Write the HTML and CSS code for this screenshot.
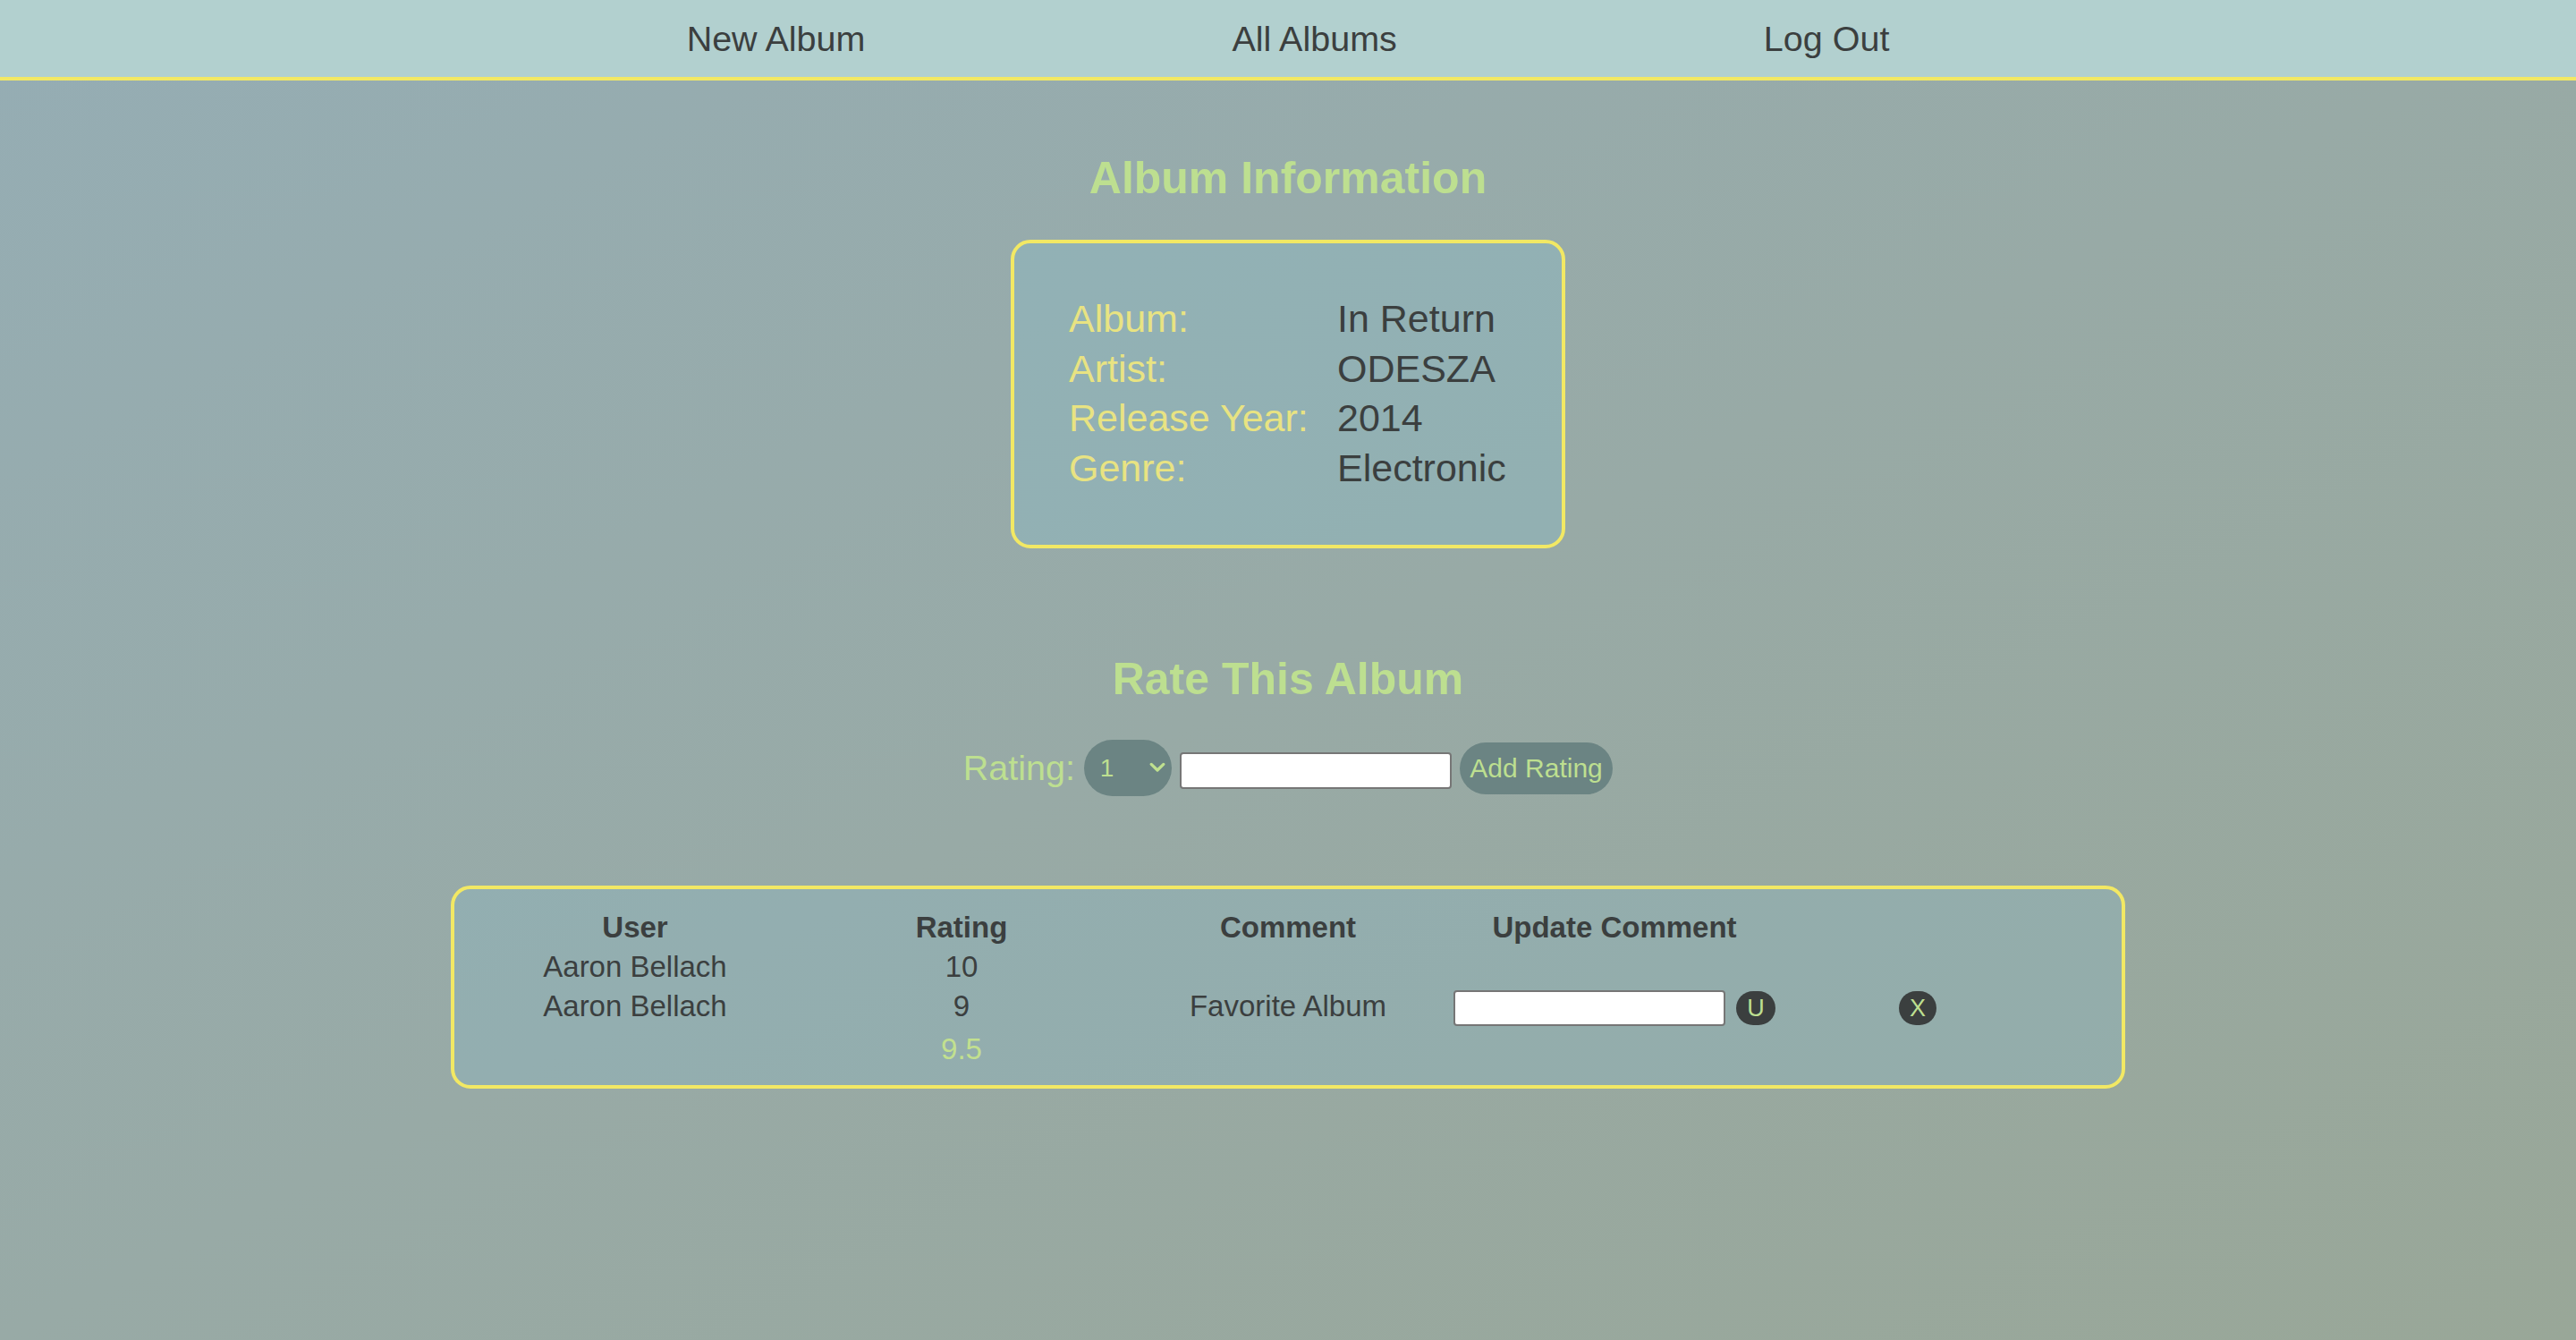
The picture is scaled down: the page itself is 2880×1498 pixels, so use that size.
FILE: index.html
```html
<!DOCTYPE html>
<html lang="en">
<head>
<meta charset="utf-8">
<title>In Return - ODESZA</title>
<link rel="stylesheet" href="styles.css">
</head>
<body>
<nav class="topnav">
  <a class="nav-link" href="#">New Album</a>
  <a class="nav-link" href="#">All Albums</a>
  <a class="nav-link" href="#">Log Out</a>
</nav>

<main class="page">
  <h2 class="section-title title-info">Album Information</h2>
  <section class="info-card">
    <div class="info-label">Album:</div><div class="info-value">In Return</div>
    <div class="info-label">Artist:</div><div class="info-value">ODESZA</div>
    <div class="info-label">Release Year:</div><div class="info-value">2014</div>
    <div class="info-label">Genre:</div><div class="info-value">Electronic</div>
  </section>

  <h2 class="section-title title-rate">Rate This Album</h2>
  <form class="rate-form">
    <label class="rate-label">Rating:</label>
    <span class="select-wrap">
      <select class="rate-select">
        <option>1</option><option>2</option><option>3</option><option>4</option><option>5</option>
        <option>6</option><option>7</option><option>8</option><option>9</option><option>10</option>
      </select>
      <svg class="chevron" viewBox="0 0 18 12" width="18" height="12" aria-hidden="true">
        <polyline points="2.2,2.4 9,9 15.8,2.4" fill="none" stroke="#bfe08f" stroke-width="3.2" stroke-linecap="round" stroke-linejoin="round"/>
      </svg>
    </span>
    <input class="text-input rate-input" type="text">
    <button class="pill-btn" type="button">Add Rating</button>
  </form>

  <section class="ratings-card">
    <div class="cell head">User</div>
    <div class="cell head">Rating</div>
    <div class="cell head">Comment</div>
    <div class="cell head">Update Comment</div>
    <div class="cell"></div>

    <div class="cell">Aaron Bellach</div>
    <div class="cell">10</div>
    <div class="cell"></div>
    <div class="cell"></div>
    <div class="cell"></div>

    <div class="cell">Aaron Bellach</div>
    <div class="cell">9</div>
    <div class="cell">Favorite Album</div>
    <div class="cell"><input class="text-input update-input" type="text"><button class="dark-btn" type="button">U</button></div>
    <div class="cell"><button class="dark-btn" type="button">X</button></div>

    <div class="cell"></div>
    <div class="cell avg">9.5</div>
    <div class="cell"></div>
    <div class="cell"></div>
    <div class="cell"></div>
  </section>
</main>
</body>
</html>
```

FILE: styles.css
```css
html, body {
  margin: 0;
  padding: 0;
}

body {
  min-height: 100vh;
  font-family: "Liberation Sans", Arial, Helvetica, sans-serif;
  color: #3b3f3f;
  background: linear-gradient(to bottom right, #95adb4 0%, #98aaa6 50%, #99a798 100%);
  background-attachment: fixed;
}

.topnav {
  height: 86px;
  display: flex;
  justify-content: center;
  gap: 410px;
  background: #b2d0cf;
  border-bottom: 4px solid #f2e864;
}

.nav-link {
  font-size: 39.5px;
  line-height: 86px;
  color: #3b3f3f;
  text-decoration: none;
}

.page {
  display: flex;
  flex-direction: column;
  align-items: center;
}

.section-title {
  margin: 0;
  font-size: 50px;
  line-height: 58px;
  font-weight: bold;
  color: #bddf90;
  text-align: center;
}

.title-info {
  margin-top: 80px;
}

.title-rate {
  margin-top: 117px;
}

.info-card {
  box-sizing: border-box;
  width: 620px;
  margin-top: 40px;
  padding: 57px 0 58px 61px;
  border: 4px solid #f2e864;
  border-radius: 22px;
  background: rgba(140, 184, 194, 0.45);
  display: grid;
  grid-template-columns: 300px 1fr;
  grid-auto-rows: 55.5px;
  font-size: 43px;
  line-height: 55.5px;
}

.info-label {
  color: #e8e382;
}

.info-value {
  color: #3b3f3f;
}

.rate-form {
  margin: 39px 0 0;
  display: flex;
  align-items: center;
  gap: 9px;
}

.rate-label {
  font-size: 39.5px;
  color: #bddf90;
  margin-right: 1px;
}

.select-wrap {
  position: relative;
  display: inline-flex;
}

.rate-select {
  appearance: none;
  -webkit-appearance: none;
  width: 98px;
  height: 63px;
  border: none;
  border-radius: 32px;
  background: #6b8483;
  color: #bddf90;
  font-family: "Liberation Sans", Arial, sans-serif;
  font-size: 28px;
  padding: 0 0 0 18px;
  outline: none;
}

.chevron {
  position: absolute;
  right: 7px;
  top: 25px;
  pointer-events: none;
}

.text-input {
  box-sizing: border-box;
  background: #ffffff;
  border: 2px solid #767676;
  border-radius: 4px;
  font-family: "Liberation Sans", Arial, sans-serif;
  font-size: 26.67px;
  padding: 0 4px;
  outline: none;
}

.rate-input {
  width: 304px;
  height: 41px;
  margin-top: 6px;
}

.pill-btn {
  height: 58px;
  padding: 0 11.5px;
  border: none;
  border-radius: 29px;
  background: #6b8483;
  color: #bddf90;
  font-family: "Liberation Sans", Arial, sans-serif;
  font-size: 30px;
}

.ratings-card {
  box-sizing: border-box;
  width: 65%;
  margin-top: 100px;
  padding: 22.5px 0 20px 21.5px;
  border: 4px solid #f2e864;
  border-radius: 22px;
  background: rgba(140, 182, 192, 0.38);
  display: grid;
  grid-template-columns: 361px 361px 361px 361px 309px;
  column-gap: 4px;
  row-gap: 4px;
  font-size: 33px;
  line-height: 36px;
}

.cell {
  padding: 2px 0;
  text-align: center;
  color: #3b3f3f;
  white-space: nowrap;
}

.cell.head {
  font-weight: bold;
}

.cell.avg {
  color: #c2e08f;
}

.update-input {
  width: 304px;
  height: 40px;
  vertical-align: baseline;
}

.dark-btn {
  height: 38px;
  padding: 0 12px;
  margin-left: 12px;
  border: none;
  border-radius: 19px;
  background: #3b3f3f;
  color: #bddf90;
  font-family: "Liberation Sans", Arial, sans-serif;
  font-size: 27px;
  vertical-align: baseline;
}

.cell > .dark-btn:only-child {
  margin-left: 0;
}
```
